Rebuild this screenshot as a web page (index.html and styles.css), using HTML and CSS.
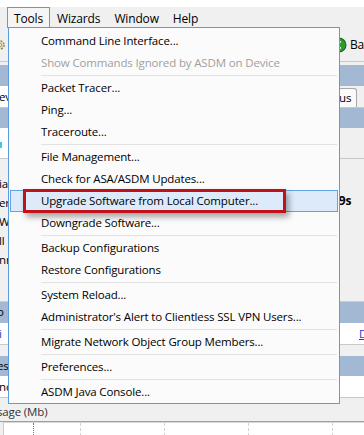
FILE: index.html
```html
<!DOCTYPE html>
<html lang="en">
<head>
  <meta charset="UTF-8">
  <meta name="viewport" content="width=device-width, initial-scale=1.0">
  <title>ASDM - Tools</title>
  <link rel="stylesheet" href="styles.css">
</head>
<body>

<div class="app">
  <div class="titlegap"></div>

  <!-- barra de menus -->
  <div class="menubar">
    <span class="menubar-gap"></span>
    <span class="menubar-item open">Tools</span>
    <span class="menubar-item">Wizards</span>
    <span class="menubar-item">Window</span>
    <span class="menubar-item">Help</span>
  </div>

  <!-- barra de ferramentas -->
  <div class="toolbar">
    <svg class="gear" width="10" height="14" viewBox="0 0 10 14">
      <circle cx="2" cy="7" r="4.2" fill="#e8d9a0" stroke="#7d7d7d" stroke-width="1.2" stroke-dasharray="2 1.3"/>
      <circle cx="2" cy="7" r="1.6" fill="#fff" stroke="#7d7d7d" stroke-width="0.8"/>
    </svg>
    <div class="back">
      <svg class="back-icon" width="18" height="18" viewBox="0 0 18 18">
        <circle cx="9" cy="9" r="8" fill="#2f9b2f" stroke="#17611a" stroke-width="1.2"/>
        <path d="M11 5 L6 9 L11 13" fill="none" stroke="#fff" stroke-width="2"/>
      </svg>
      <span>Ba</span>
    </div>
  </div>

  <div class="strip grey h3"></div>
  <div class="band h21"></div>

  <div class="row h21">
    <span class="frag white">ev</span>
    <span class="tab">us</span>
  </div>

  <div class="band h20 topline"></div>

  <div class="row h30">
    <span class="frag white tall"><i class="cyan"></i></span>
    <span class="frag grey tall"></span>
  </div>

  <div class="panel">
    <div class="panel-left">
      <span>ia</span>
      <span>er</span>
      <span>W</span>
      <span>ll</span>
      <span>nn</span>
    </div>
    <div class="panel-right">
      <b>49s</b>
    </div>
  </div>

  <div class="strip grey h16 bottomline"></div>
  <div class="band h21 cut">o</div>
  <div class="row h21 whiterow">
    <span class="frag link">i</span>
    <span class="frag link under">D</span>
  </div>
  <div class="strip grey h11 topline"></div>
  <div class="band h20 cut">es</div>
  <div class="row h21 whiterow">
    <span class="frag">nc</span>
  </div>
  <div class="strip grey h10 topline"></div>
  <div class="usage">sage (Mb)</div>

  <div class="chart">
    <div class="axis"></div>
    <div class="grid"></div>
    <div class="grid"></div>
    <div class="grid"></div>
    <div class="grid"></div>
  </div>
</div>

<!-- menu suspenso Tools -->
<div class="menu">
  <div class="item">Command Line Interface...</div>
  <div class="item disabled">Show Commands Ignored by ASDM on Device</div>
  <div class="sep"></div>
  <div class="item">Packet Tracer...</div>
  <div class="item">Ping...</div>
  <div class="item">Traceroute...</div>
  <div class="sep"></div>
  <div class="item">File Management...</div>
  <div class="item">Check for ASA/ASDM Updates...</div>
  <div class="item hover">Upgrade Software from Local Computer...<span class="mark"></span></div>
  <div class="item">Downgrade Software...</div>
  <div class="sep"></div>
  <div class="item">Backup Configurations</div>
  <div class="item">Restore Configurations</div>
  <div class="sep"></div>
  <div class="item">System Reload...</div>
  <div class="item">Administrator's Alert to Clientless SSL VPN Users...</div>
  <div class="sep"></div>
  <div class="item">Migrate Network Object Group Members...</div>
  <div class="sep"></div>
  <div class="item">Preferences...</div>
  <div class="sep"></div>
  <div class="item">ASDM Java Console...</div>
</div>

</body>
</html>
```

FILE: styles.css
```css
/* Estilos gerais */
body {
  margin: 0;
  font-family: 'Open Sans', 'Noto Sans', sans-serif;
  font-size: 11.5px;
  letter-spacing: -0.15px;
  color: #000;
  background-color: #f0f0f0;
  width: 364px;
  height: 435px;
  overflow: hidden;
  position: relative;
}

.app {
  display: flex;
  flex-direction: column;
}

.titlegap {
  height: 7px;
  background-color: #fff;
}

/* Barra de menus */
.menubar {
  height: 21px;
  display: flex;
  align-items: stretch;
  background-color: #f0f0f0;
  font-size: 12px;
}

.menubar-gap {
  width: 7px;
}

.menubar-item {
  padding: 0 6px;
  border: 1px solid transparent;
  border-bottom: none;
  line-height: 21px;
}

.menubar-item.open {
  border-color: #5b9be0;
  background-color: #f5f5f5;
}

/* Barra de ferramentas */
.toolbar {
  height: 33px;
  display: flex;
  align-items: center;
  justify-content: space-between;
  border-bottom: 1px solid #c9c9c9;
}

.gear {
  margin-left: -2px;
}

.back {
  display: flex;
  align-items: center;
  gap: 3px;
  font-size: 12px;
  width: 33px;
}

/* Faixas e linhas de fundo */
.strip.grey {
  background-color: #f0f0f0;
}

.h3 { height: 3px; }
.h10 { height: 10px; }
.h11 { height: 11px; }
.h16 { height: 16px; }
.h20 { height: 20px; }
.h21 { height: 21px; }
.h30 { height: 30px; }

.topline {
  border-top: 1px solid #c8c8c8;
}

.bottomline {
  border-bottom: 1px solid #c4cfdc;
}

.band {
  background-color: #a2b8d3;
  line-height: 20px;
}

.band.cut {
  text-indent: -3px;
}

.row {
  display: flex;
  justify-content: space-between;
  align-items: stretch;
  line-height: 21px;
}

.whiterow {
  background-color: #fff;
}

.frag {
  display: block;
  width: 8px;
  overflow: hidden;
  white-space: nowrap;
  text-indent: -1px;
}

.frag.white {
  background-color: #fff;
}

.frag.grey {
  background-color: #f0f0f0;
  width: 24px;
}

.frag.tall {
  position: relative;
}

.cyan {
  position: absolute;
  left: 0;
  top: 14px;
  width: 2px;
  height: 6px;
  background-color: #3fc9e8;
}

.frag.link {
  color: #1a3fd0;
}

.frag.under {
  width: 5px;
  text-decoration: underline;
  text-indent: 0;
}

.tab {
  width: 17px;
  margin: 2px 7px 0 0;
  border: 1px solid #a9a9a9;
  border-bottom: none;
  border-radius: 3px 3px 0 0;
  background-color: #fafafa;
  line-height: 18px;
  overflow: hidden;
  text-indent: 0;
}

/* Painel de informacoes */
.panel {
  height: 126px;
  display: flex;
  justify-content: space-between;
  border-top: 1px solid #c8c8c8;
}

.panel-left {
  width: 8px;
  overflow: hidden;
  display: flex;
  flex-direction: column;
  padding-top: 15px;
  line-height: 19px;
  text-indent: -1px;
}

.panel-right {
  width: 28px;
  padding-top: 33px;
  font-size: 12px;
  text-indent: -4px;
}

.usage {
  height: 13px;
  line-height: 8px;
  text-indent: -3px;
  color: #333;
  border-bottom: 1px solid #a0a0a0;
}

/* Grafico de uso */
.chart {
  height: 18px;
  margin-left: 3px;
  border-left: 1px solid #c8c8c8;
  border-top: 1px solid #d8d8d8;
  background-color: #fff;
  display: flex;
  padding-left: 29px;
}

.axis {
  width: 0;
  border-left: 1px dotted #777;
  margin-right: 46px;
}

.grid {
  width: 0;
  margin-right: 83px;
  border-left: 1px dashed #d2d2d2;
}

/* Menu suspenso */
.menu {
  position: absolute;
  left: 8px;
  top: 27px;
  width: 332px;
  box-sizing: border-box;
  padding: 2px 0 0;
  border: 1px solid #5b9be0;
  background-color: #fbfbfb;
}

.item {
  height: 22px;
  line-height: 22px;
  padding-left: 32px;
  white-space: nowrap;
  color: #000;
}

.item.disabled {
  color: #a0a0a0;
}

.item.hover {
  position: relative;
  margin: 0 1px;
  padding-left: 30px;
  height: 20px;
  line-height: 20px;
  border: 1px solid #62a3e6;
  background-color: #dceafa;
}

.mark {
  position: absolute;
  left: 12px;
  top: -2px;
  width: 257px;
  height: 18px;
  border: 3px solid #c1121c;
  box-shadow: 3px 4px 6px rgba(0, 0, 0, 0.35);
}

.sep {
  height: 1px;
  margin: 1px 2px 1px 32px;
  background-color: #e2e2e2;
}
```
